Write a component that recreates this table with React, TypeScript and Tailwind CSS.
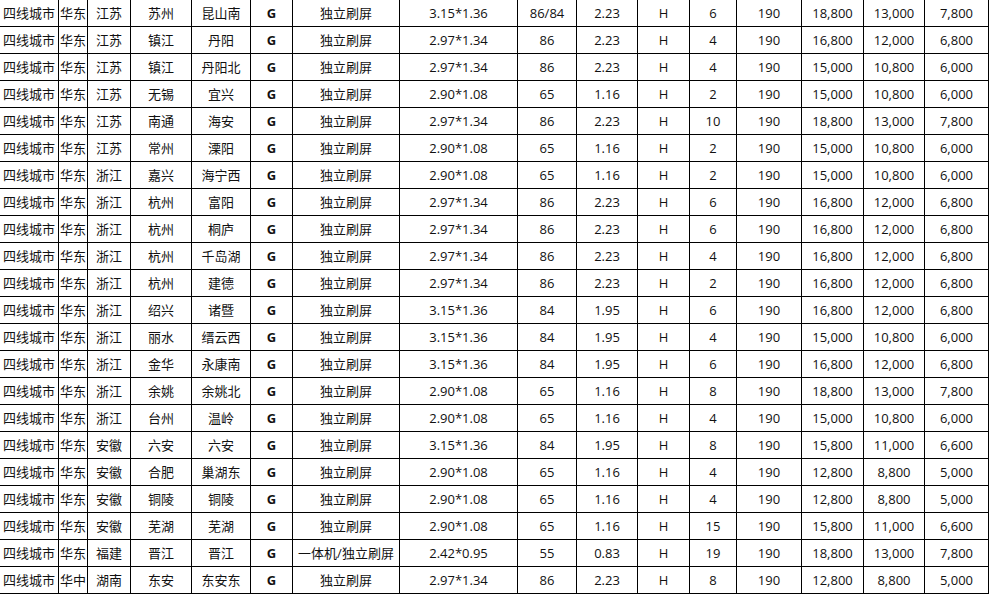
const rows: string[][] = [
  ["华东", "江苏", "苏州", "昆山南", "独立刷屏", "3.15*1.36", "86/84", "2.23", "6", "18,800", "13,000", "7,800"],
  ["华东", "江苏", "镇江", "丹阳", "独立刷屏", "2.97*1.34", "86", "2.23", "4", "16,800", "12,000", "6,800"],
  ["华东", "江苏", "镇江", "丹阳北", "独立刷屏", "2.97*1.34", "86", "2.23", "4", "15,000", "10,800", "6,000"],
  ["华东", "江苏", "无锡", "宜兴", "独立刷屏", "2.90*1.08", "65", "1.16", "2", "15,000", "10,800", "6,000"],
  ["华东", "江苏", "南通", "海安", "独立刷屏", "2.97*1.34", "86", "2.23", "10", "18,800", "13,000", "7,800"],
  ["华东", "江苏", "常州", "溧阳", "独立刷屏", "2.90*1.08", "65", "1.16", "2", "15,000", "10,800", "6,000"],
  ["华东", "浙江", "嘉兴", "海宁西", "独立刷屏", "2.90*1.08", "65", "1.16", "2", "15,000", "10,800", "6,000"],
  ["华东", "浙江", "杭州", "富阳", "独立刷屏", "2.97*1.34", "86", "2.23", "6", "16,800", "12,000", "6,800"],
  ["华东", "浙江", "杭州", "桐庐", "独立刷屏", "2.97*1.34", "86", "2.23", "6", "16,800", "12,000", "6,800"],
  ["华东", "浙江", "杭州", "千岛湖", "独立刷屏", "2.97*1.34", "86", "2.23", "4", "16,800", "12,000", "6,800"],
  ["华东", "浙江", "杭州", "建德", "独立刷屏", "2.97*1.34", "86", "2.23", "2", "16,800", "12,000", "6,800"],
  ["华东", "浙江", "绍兴", "诸暨", "独立刷屏", "3.15*1.36", "84", "1.95", "6", "16,800", "12,000", "6,800"],
  ["华东", "浙江", "丽水", "缙云西", "独立刷屏", "3.15*1.36", "84", "1.95", "4", "15,000", "10,800", "6,000"],
  ["华东", "浙江", "金华", "永康南", "独立刷屏", "3.15*1.36", "84", "1.95", "6", "16,800", "12,000", "6,800"],
  ["华东", "浙江", "余姚", "余姚北", "独立刷屏", "2.90*1.08", "65", "1.16", "8", "18,800", "13,000", "7,800"],
  ["华东", "浙江", "台州", "温岭", "独立刷屏", "2.90*1.08", "65", "1.16", "4", "15,000", "10,800", "6,000"],
  ["华东", "安徽", "六安", "六安", "独立刷屏", "3.15*1.36", "84", "1.95", "8", "15,800", "11,000", "6,600"],
  ["华东", "安徽", "合肥", "巢湖东", "独立刷屏", "2.90*1.08", "65", "1.16", "4", "12,800", "8,800", "5,000"],
  ["华东", "安徽", "铜陵", "铜陵", "独立刷屏", "2.90*1.08", "65", "1.16", "4", "12,800", "8,800", "5,000"],
  ["华东", "安徽", "芜湖", "芜湖", "独立刷屏", "2.90*1.08", "65", "1.16", "15", "15,800", "11,000", "6,600"],
  ["华东", "福建", "晋江", "晋江", "一体机/独立刷屏", "2.42*0.95", "55", "0.83", "19", "18,800", "13,000", "7,800"],
  ["华中", "湖南", "东安", "东安东", "独立刷屏", "2.97*1.34", "86", "2.23", "8", "12,800", "8,800", "5,000"],
];

function Cell({ children, bold }: { children: React.ReactNode; bold?: boolean }) {
  return (
    <div
      className={
        "h-[26px] pt-[1px] flex items-center justify-center whitespace-nowrap border-r border-black overflow-hidden" +
        (bold ? " font-bold" : "")
      }
    >
      {children}
    </div>
  );
}

export default function App() {
  return (
    <div className="w-[993px] h-[595px] bg-white overflow-hidden text-[13px] text-[#111] font-['Open_Sans','Noto_Sans_CJK_SC',sans-serif]">
      <div className="w-[989px]">
        {rows.map((r, i) => (
          <div
            key={i}
            className="grid grid-cols-[59px_29px_43px_61px_59px_42px_107px_118px_59px_61px_52px_47px_65px_62px_61px_64px] border-b border-black"
          >
            <Cell>四线城市</Cell>
            <Cell>{r[0]}</Cell>
            <Cell>{r[1]}</Cell>
            <Cell>{r[2]}</Cell>
            <Cell>{r[3]}</Cell>
            <Cell bold>G</Cell>
            <Cell>{r[4]}</Cell>
            <Cell>{r[5]}</Cell>
            <Cell>{r[6]}</Cell>
            <Cell>{r[7]}</Cell>
            <Cell>H</Cell>
            <Cell>{r[8]}</Cell>
            <Cell>190</Cell>
            <Cell>{r[9]}</Cell>
            <Cell>{r[10]}</Cell>
            <Cell>{r[11]}</Cell>
          </div>
        ))}
      </div>
    </div>
  );
}
